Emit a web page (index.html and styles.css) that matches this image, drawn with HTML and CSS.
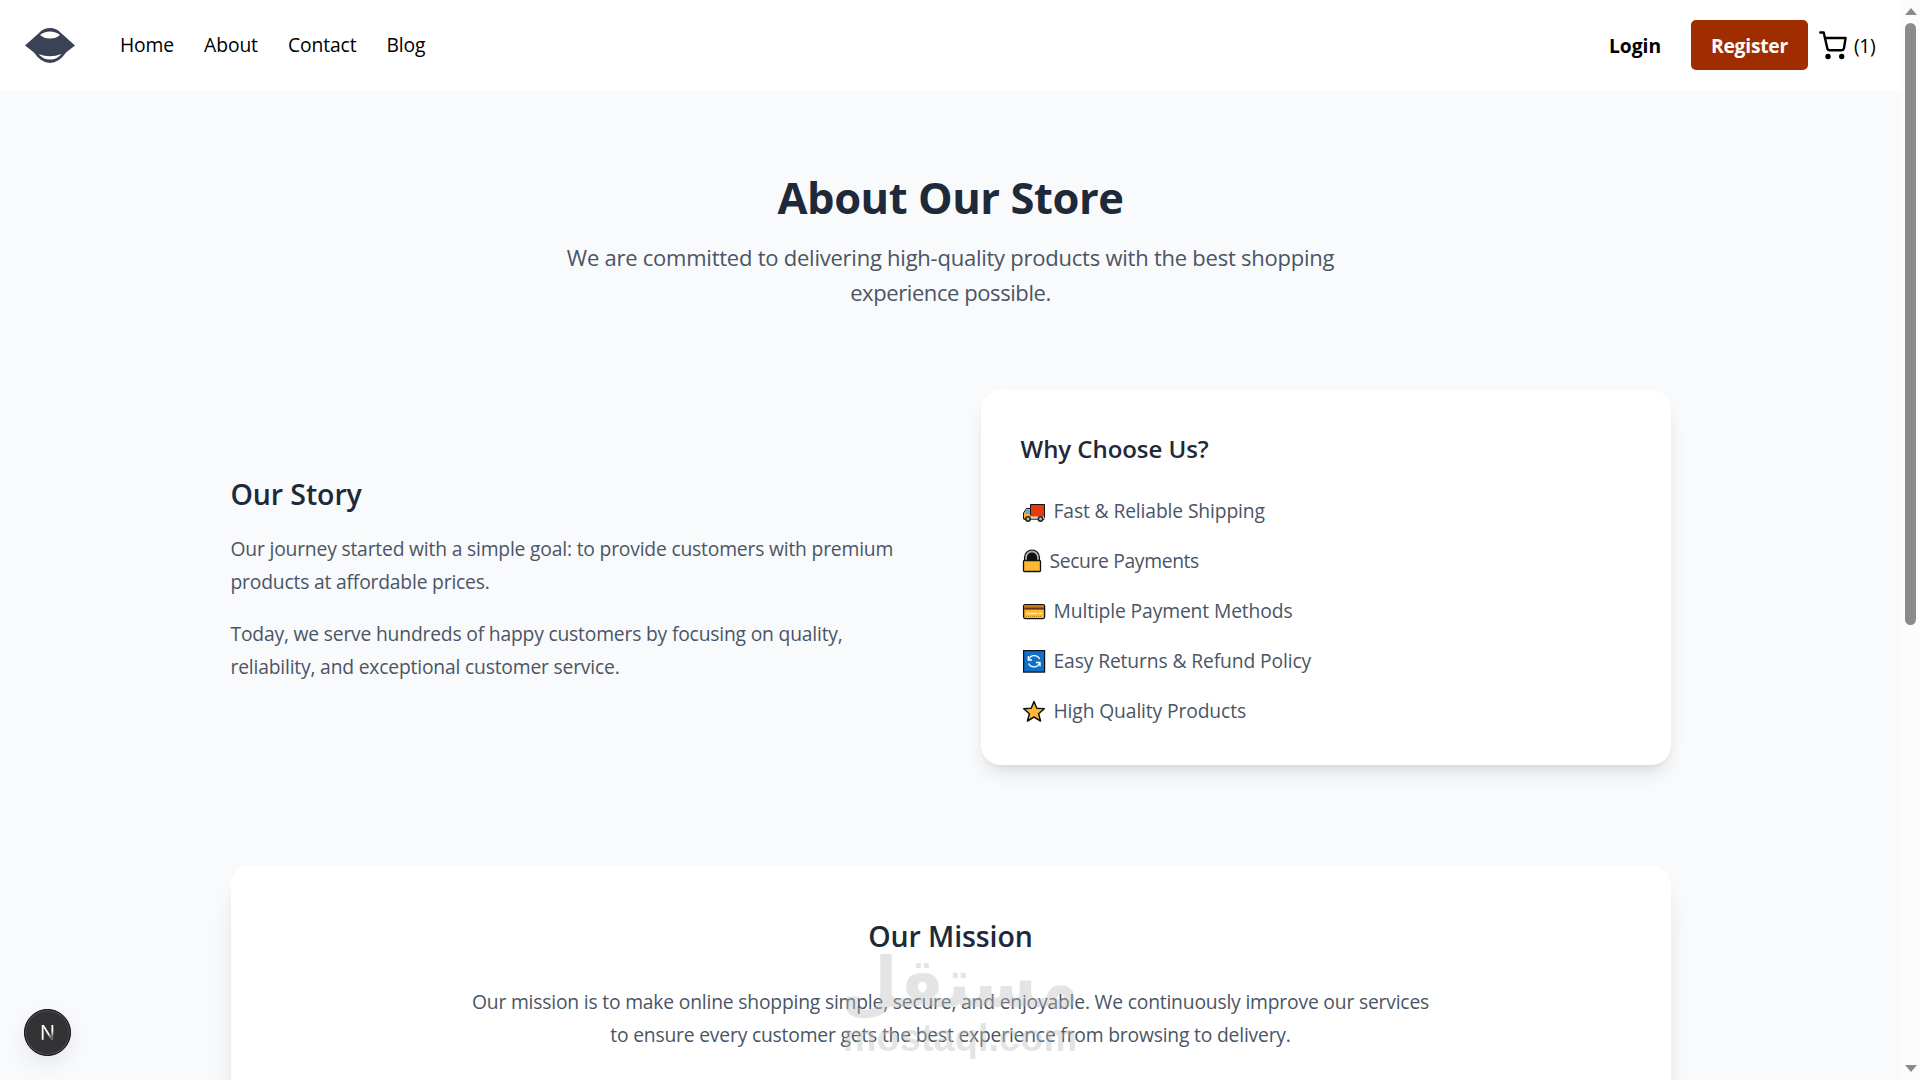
FILE: index.html
```html
<!DOCTYPE html>
<html lang="en">
<head>
<meta charset="utf-8">
<title>About Our Store</title>
<link rel="stylesheet" href="styles.css">
</head>
<body>
<div class="window">
  <div class="page">
    <header class="header">
      <svg class="logo" viewBox="0 0 50 36" width="50" height="36">
        <path fill="#3b4256" d="M0 18.500 14 6Q18.500 1 25 1T36 6L50 18.500 41 25.500Q34 36 25 36T9 25.500Z"/>
        <path fill="#fff" d="M15 8Q19 4.500 25 4.500T35 8Q31 11.500 25 11.500T15 8ZM13.500 27Q25 31.500 36.500 27 32 32.500 25 32.500T13.500 27Z"/>
      </svg>
      <nav class="nav">
        <a class="nav-home">Home</a><a class="nav-about">About</a><a class="nav-contact">Contact</a><a class="nav-blog">Blog</a>
      </nav>
      <div class="actions">
        <a class="login">Login</a>
        <a class="register">Register</a>
        <svg class="cart" viewBox="0 0 28 29" width="28" height="29" fill="none" stroke="#000" stroke-width="2.400" stroke-linecap="round" stroke-linejoin="round">
          <path d="M1.300 1.500H4.700L8.300 17.300Q8.700 19.300 10.700 19.300H22.800Q24.500 19.300 24.900 17.600L26.600 7H6"/>
          <circle cx="9" cy="25.500" r="1.500" fill="#000"/><circle cx="22.700" cy="25.500" r="1.500" fill="#000"/>
        </svg>
        <span class="count">(1)</span>
      </div>
    </header>
    <main class="main">
      <section class="hero">
        <h1 class="title">About Our Store</h1>
        <p class="lead">We are committed to delivering high-quality products with the best shopping<br><span class="lead-end">experience possible.</span></p>
      </section>
      <section class="columns">
        <div class="story">
          <h2 class="heading">Our Story</h2>
          <p class="text">Our journey started with a simple goal: to provide customers with premium<br>products at affordable prices.</p>
          <p class="text">Today, we serve hundreds of happy customers by focusing on quality,<br>reliability, and exceptional customer service.</p>
        </div>
        <div class="card why">
          <h3 class="subheading">Why Choose Us?</h3>
          <ul class="list">
            <li class="item"><svg class="icon" viewBox="0 0 24 24" width="24" height="24"><path fill="#e8380d" stroke="#111" d="M8.500 4.500h14v13h-14z"/><path fill="#ffb52e" stroke="#111" d="M8.500 8.500H4.500L1.500 13v6h7z"/><path fill="#5aa9ee" d="M4.700 9.800h3v4.300h-4.700z"/><path fill="#ffb52e" d="M3 15.500h6v3H3z"/><path fill="#ddd" d="M9 16.500h13v2H9z"/><path stroke="#111" stroke-width="1" d="M2 19.200h20.500"/><g fill="#bbb" stroke="#222" stroke-width="1.500"><circle cx="6" cy="19" r="2.200"/><circle cx="18.500" cy="19" r="2.200"/></g></svg>Fast &amp; Reliable Shipping</li>
            <li class="item item-lock"><svg class="icon icon-lock" viewBox="0 0 20 24" width="20" height="24"><path fill="#111" stroke="#111" stroke-width="1.500" d="M2.700 12V8.500a7.300 7.300 0 0 1 14.600 0V12z"/><path fill="none" stroke="#aaa" stroke-width="1.800" d="M4 12V8.500a6 6 0 0 1 12 0V12"/><rect x="1.500" y="11.500" width="17" height="11" rx="1" fill="#ffb92e" stroke="#111" stroke-width="1.300"/></svg>Secure Payments</li>
            <li class="item"><svg class="icon" viewBox="0 0 24 24" width="24" height="24"><rect x="1.600" y="4.600" width="21" height="14" rx="1.500" fill="#ffb92e" stroke="#111" stroke-width="1.300"/><path fill="#c87817" d="M2.200 5.200h19.800v2.600H2.200z"/><path fill="#6b3020" d="M2.200 7.600h19.800v2H2.200z"/><path stroke="#fff0d0" stroke-width="1.500" d="M4.500 13.500h11M17 13.500h3"/><path stroke="#c98217" stroke-dasharray="1 1" d="M4 16.500h15"/></svg>Multiple Payment Methods</li>
            <li class="item"><svg class="icon" viewBox="0 0 24 24" width="24" height="24"><rect x="1.600" y=".6" width="21" height="21.500" fill="#0f70cc" stroke="#111" stroke-width="1.200"/><g fill="none" stroke="#fff" stroke-width="1.300"><path d="M6.300 6v4H10M6.600 9.500A6 6 0 0 1 17.600 9M18 16.500v-4h-4M17.600 13A6 6 0 0 1 6.600 13.500"/></g></svg>Easy Returns &amp; Refund Policy</li>
            <li class="item"><svg class="icon" viewBox="0 0 24 24" width="24" height="24"><path fill="#ffb92e" stroke="#111" stroke-width="1.500" stroke-linejoin="round" d="m12 1.500 2.800 6.800 7.500.5-5.700 4.900 1.900 7.300L12 17l-6.500 4 1.900-7.300L1.700 8.800l7.500-.5z"/></svg>High Quality Products</li>
          </ul>
        </div>
      </section>
      <section class="card mission">
        <h2 class="heading">Our Mission</h2>
        <p class="text mission-text">Our mission is to make online shopping simple, secure, and enjoyable. We continuously improve our services<br>to ensure every customer gets the best experience from browsing to delivery.</p>
      </section>
    </main>
  </div>
  <div class="scrollbar"><i class="arrow up"></i><i class="thumb"></i><i class="arrow down"></i></div>
  <div class="badge"><span class="badge-letter">N</span></div>
  <div class="watermark"><span class="mark-ar" lang="ar">مستقل</span><span class="mark-en">mostaql.com</span></div>
</div>
</body>
</html>
```
FILE: styles.css
```css
* { box-sizing: border-box; margin: 0; padding: 0; }
html, body { overflow: hidden; }
body { font-family: "Open Sans", "Noto Sans", sans-serif; font-size: 19.3px; color: #000; }
.window { position: relative; display: flex; width: 1920px; height: 1080px; overflow: hidden; }
.page { width: 1901px; height: 1080px; background: #f9fafc; overflow: hidden; white-space: nowrap; }
.header { display: flex; align-items: center; height: 90px; padding: 0 25px; background: #fff; }
.logo { display: block; }
.nav { display: flex; gap: 30px; margin-left: 45px; padding-bottom: 1px; line-height: 30px; letter-spacing: -.1px; }
.actions { display: flex; align-items: center; margin-left: auto; line-height: 30px; }
.login { width: 82px; font-weight: 700; padding-top: 2px; letter-spacing: -.05px; }
.register { width: 117px; height: 50px; line-height: 52px; border-radius: 5px; background: #9f2d00; color: #fff; font-weight: 700; text-align: center; letter-spacing: -.25px; }
.cart { margin: 0 7px 0 11px; }
.count { padding-top: 2px; width: 22px; letter-spacing: -.4px; }
.main { width: 1440px; margin: 0 auto; padding-top: 80px; }
.hero { height: 220px; text-align: center; }
.title { font-size: 43.5px; line-height: 56px; font-weight: 700; letter-spacing: -.45px; color: #1e2939; }
.lead { margin-top: 14px; font-size: 22px; line-height: 35px; letter-spacing: -.24px; color: #4a5565; }
.lead-end { letter-spacing: -.42px; }
.columns { display: grid; grid-template-columns: 1fr 1fr; gap: 60px; align-items: center; }
.story { padding-top: 2px; }
.heading { font-size: 28.5px; line-height: 45px; font-weight: 600; letter-spacing: -.1px; color: #1e2939; }
.story .heading { line-height: 41px; }
.text { font-size: 19.3px; line-height: 32.5px; letter-spacing: -.19px; color: #4a5565; margin-top: 20px; }
.heading + .text { margin-top: 18px; }
.card { background: #fff; border-radius: 20px; }
.why { height: 375px; padding: 41px 40px; box-shadow: 0 12px 19px -4px rgba(0,0,0,.1), 0 5px 8px -5px rgba(0,0,0,.1); }
.subheading { font-size: 24px; line-height: 35px; font-weight: 600; letter-spacing: -.05px; color: #1e2939; }
.list { list-style: none; margin-top: 29px; display: grid; gap: 20px; }
.item { display: flex; align-items: center; height: 30px; letter-spacing: -.13px; color: #4a5565; }
.icon { margin: 4px 8px 0 1px; }
.item-lock { letter-spacing: -.35px; }
.icon-lock { margin-top: 2px; }
.mission { height: 340px; margin-top: 100px; padding-top: 49px; text-align: center; box-shadow: 0 25px 31px -6px rgba(0,0,0,.1), 0 10px 13px -7px rgba(0,0,0,.1); }
.heading + .mission-text { margin-top: 27px; letter-spacing: -.19px; }
.scrollbar { width: 19px; height: 1080px; padding: 8px 4px; background: #fcfcfc; display: flex; flex-direction: column; align-items: center; }
.arrow { width: 0; height: 0; border: 6.5px solid transparent; }
.up { border-top: 0; border-bottom: 7px solid #8b8b8b; }
.thumb { width: 11px; height: 602px; margin-top: 8px; border-radius: 6px; background: #8b8b8b; }
.down { margin-top: auto; border-bottom: 0; border-top: 7px solid #8b8b8b; }
.badge { position: absolute; left: 24px; top: 1009px; width: 47px; height: 47px; border-radius: 50%; display: flex; align-items: center; justify-content: center; background: #353236; border: 1px solid #000; box-shadow: inset 0 0 0 1px #55525c, 0 8px 24px rgba(0,0,0,.08); }
.badge-letter { font-family: Inter, sans-serif; font-size: 20px; line-height: 20px; background: linear-gradient(145deg, #fff 55%, #666 75%); background-clip: text; color: transparent; }
.watermark { position: absolute; left: 845px; top: 952px; width: 230px; height: 108px; color: #bebebe; opacity: .4; text-align: center; white-space: nowrap; }
.mark-ar { display: block; margin: 0 -20px; font: 700 70px/62px "DejaVu Sans", sans-serif; transform: scaleX(.93); }
.mark-en { display: block; margin: 3px -10px 0; font: 700 38px/42px "Liberation Sans", sans-serif; }
```
